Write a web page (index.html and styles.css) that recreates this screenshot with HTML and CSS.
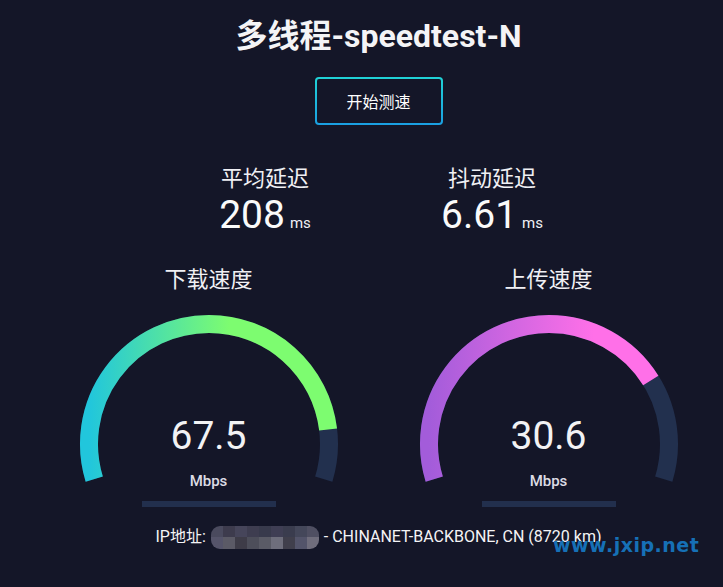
FILE: index.html
```html
<!DOCTYPE html>
<html lang="zh">
<head>
<meta charset="utf-8">
<title>多线程-speedtest-N</title>
<link rel="stylesheet" href="styles.css">
</head>
<body>
<div class="page">
  <h1 class="title">多线程-speedtest-N</h1>
  <div class="btn-row"><button class="start-btn">开始测速</button></div>

  <div class="latency">
    <div class="lat-item">
      <div class="lat-label">平均延迟</div>
      <div class="lat-value"><span class="num">208</span><span class="unit">ms</span></div>
    </div>
    <div class="lat-item">
      <div class="lat-label">抖动延迟</div>
      <div class="lat-value"><span class="num">6.61</span><span class="unit">ms</span></div>
    </div>
  </div>

  <div class="gauges">
    <div class="gauge">
      <div class="gauge-label">下载速度</div>
      <div class="gauge-dial">
        <svg width="260" height="172" viewBox="0 0 260 172">
          <defs>
            <linearGradient id="gDown" gradientUnits="userSpaceOnUse" x1="10" y1="0" x2="150" y2="0">
              <stop offset="0" stop-color="#21c6dc"/>
              <stop offset="1" stop-color="#7dfc70"/>
            </linearGradient>
          </defs>
          <path class="track" d="M 15.25 165.09 A 120 120 0 1 1 244.75 165.09"/>
          <path d="M 15.25 165.09 A 120 120 0 1 1 244.75 165.09" pathLength="100" stroke="url(#gDown)" stroke-width="18" fill="none" stroke-dasharray="88.8 200"/>
        </svg>
        <div class="readout">
          <div class="speed">67.5</div>
          <div class="speed-unit">Mbps</div>
        </div>
      </div>
      <div class="gauge-bar"></div>
    </div>
    <div class="gauge">
      <div class="gauge-label">上传速度</div>
      <div class="gauge-dial">
        <svg width="260" height="172" viewBox="0 0 260 172">
          <defs>
            <linearGradient id="gUp" gradientUnits="userSpaceOnUse" x1="10" y1="0" x2="175" y2="0">
              <stop offset="0" stop-color="#a35cda"/>
              <stop offset="1" stop-color="#ff70e8"/>
            </linearGradient>
          </defs>
          <path class="track" d="M 15.25 165.09 A 120 120 0 1 1 244.75 165.09"/>
          <path d="M 15.25 165.09 A 120 120 0 1 1 244.75 165.09" pathLength="100" stroke="url(#gUp)" stroke-width="18" fill="none" stroke-dasharray="77.1 200"/>
        </svg>
        <div class="readout">
          <div class="speed">30.6</div>
          <div class="speed-unit">Mbps</div>
        </div>
      </div>
      <div class="gauge-bar"></div>
    </div>
  </div>

  <div class="ip-line">
    <span>IP地址:</span>
    <span class="mosaic">
      <i style="background:#4a4a5e"></i><i style="background:#3d3b4d"></i><i style="background:#46455a"></i><i style="background:#3e3d50"></i><i style="background:#383a4c"></i><i style="background:#3f3e54"></i><i style="background:#3a3c4e"></i><i style="background:#44475a"></i><i style="background:#4f4f62"></i>
      <i style="background:#55546a"></i><i style="background:#5b5a66"></i><i style="background:#3e3c48"></i><i style="background:#4d4e5a"></i><i style="background:#5a5b66"></i><i style="background:#6e6e7c"></i><i style="background:#403f4c"></i><i style="background:#53546a"></i><i style="background:#6f6d7c"></i>
    </span>
    <span>- CHINANET-BACKBONE, CN (8720 km)</span>
  </div>

  <div class="watermark">www.jxip.net</div>
</div>
</body>
</html>
```
FILE: styles.css
```css
* { box-sizing: border-box; }
html, body {
  margin: 0;
  padding: 0;
  background: #141628;
  height: 100%;
  overflow: hidden;
}
body {
  font-family: Roboto, "Noto Sans CJK SC", sans-serif;
  color: #f0f0f4;
}
.page {
  position: relative;
  width: 723px;
  height: 587px;
  padding: 18px 0 0 34px;
}
.title {
  margin: 0;
  font-size: 32px;
  line-height: 36px;
  font-weight: 700;
  text-align: center;
  color: #f4f4f6;
}
.btn-row {
  display: flex;
  justify-content: center;
  margin-top: 23px;
}
.start-btn {
  width: 128px;
  height: 48px;
  background: #141628;
  border: 2px solid transparent;
  border-radius: 4px;
  background-image: linear-gradient(#141628, #141628), linear-gradient(180deg, #20d2d6, #1a9fe2);
  background-origin: border-box;
  background-clip: padding-box, border-box;
  color: #ffffff;
  font-family: Roboto, "Noto Sans CJK SC", sans-serif;
  font-size: 16px;
  cursor: pointer;
}
.latency {
  display: flex;
  justify-content: center;
  gap: 47px;
  margin-top: 40px;
}
.lat-item {
  width: 180px;
  display: flex;
  flex-direction: column;
  align-items: center;
}
.lat-label {
  font-size: 22px;
  line-height: 28px;
  color: #f0f0f4;
}
.lat-value {
  display: flex;
  align-items: baseline;
  gap: 5px;
  margin-top: 4px;
}
.lat-value .num {
  font-size: 39px;
  line-height: 37px;
  color: #fafafa;
}
.lat-value .unit {
  font-size: 15px;
  color: #f0f0f4;
}
.gauges {
  display: flex;
  justify-content: center;
  gap: 80px;
  margin-top: 32px;
}
.gauge {
  width: 260px;
  display: flex;
  flex-direction: column;
  align-items: center;
}
.gauge-label {
  font-size: 22px;
  line-height: 28px;
  color: #f0f0f4;
}
.gauge-dial {
  position: relative;
  width: 260px;
  height: 172px;
  margin-top: 20px;
}
.gauge-dial svg { display: block; }
.track {
  fill: none;
  stroke: #22304e;
  stroke-width: 18;
}
.readout {
  position: absolute;
  left: 0;
  right: 0;
  top: 104px;
  display: flex;
  flex-direction: column;
  align-items: center;
}
.speed {
  font-size: 39px;
  line-height: 37px;
  color: #f2f2f4;
}
.speed-unit {
  margin-top: 19px;
  font-size: 15px;
  line-height: 15px;
  font-weight: 500;
  color: #dcdce4;
}
.gauge-bar {
  width: 134px;
  height: 6px;
  background: #222f4d;
  margin-top: 15px;
}
.ip-line {
  display: flex;
  justify-content: center;
  align-items: center;
  gap: 5px;
  margin-top: 18px;
  font-size: 16px;
  line-height: 24px;
  color: #f4f4f6;
}
.mosaic {
  display: grid;
  grid-template-columns: repeat(9, 12px);
  grid-template-rows: repeat(2, 11.5px);
  border-radius: 9px;
  overflow: hidden;
  filter: blur(0.6px);
}
.mosaic i { display: block; }
.watermark {
  position: absolute;
  left: 553px;
  top: 534px;
  font-family: "DejaVu Sans", sans-serif;
  font-weight: 700;
  font-size: 19px;
  letter-spacing: 0.5px;
  color: #1670b6;
}
```
